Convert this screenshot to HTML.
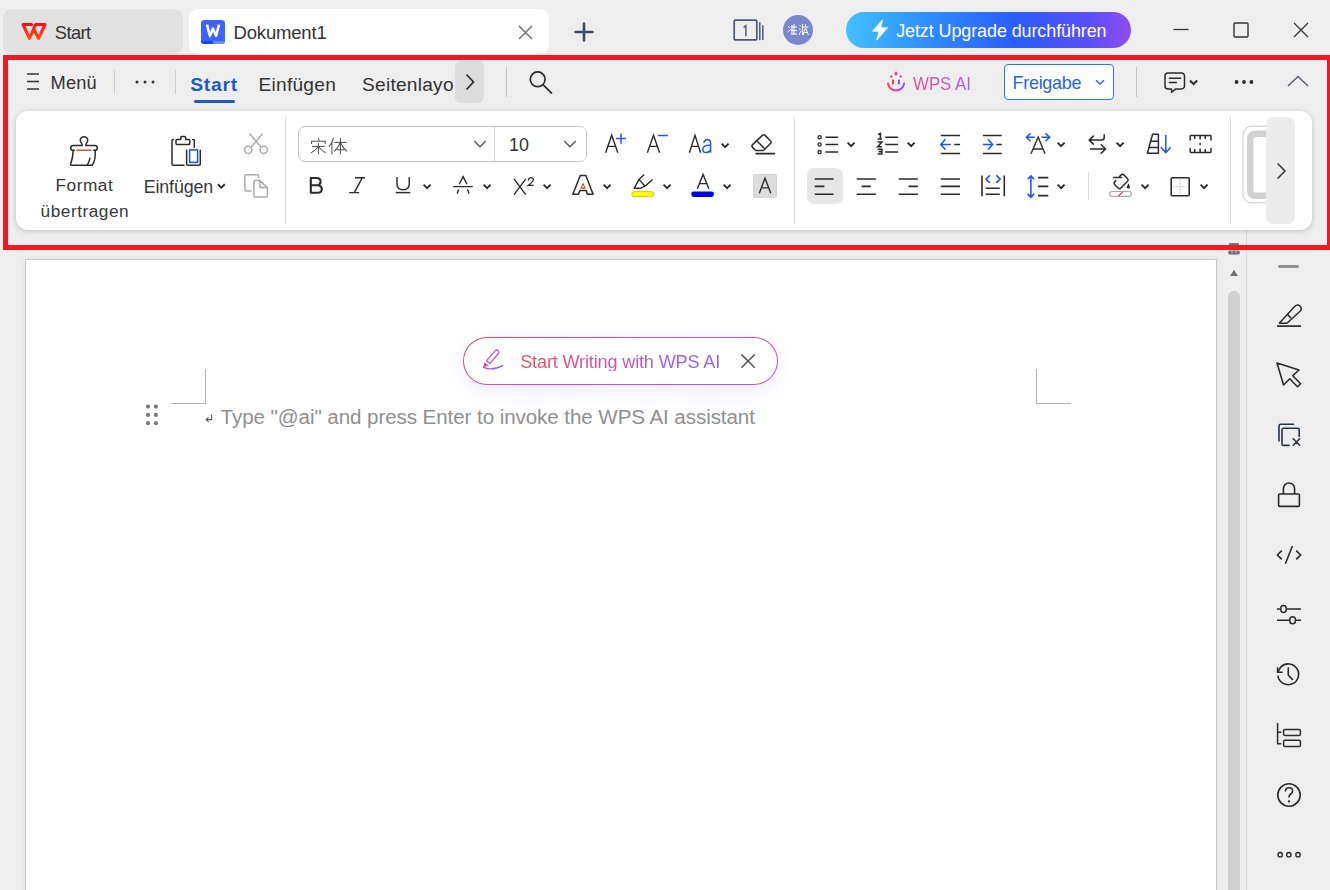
<!DOCTYPE html>
<html><head><meta charset="utf-8"><style>
html,body{margin:0;padding:0;}
body{width:1330px;height:890px;overflow:hidden;position:relative;background:#eeeeee;font-family:"Liberation Sans",sans-serif;}
.t{position:absolute;line-height:1;white-space:nowrap;}
svg{overflow:visible}
</style></head><body>
<div style="position:absolute;left:3px;top:9px;width:180px;height:45px;background:#e1e1e1;border-radius:9px"></div>
<div style="position:absolute;left:189px;top:9px;width:360px;height:45px;background:#ffffff;border-radius:9px"></div>
<svg style="position:absolute;left:18px;top:18px;" width="32" height="26" viewBox="0 0 32 26" fill="none"><defs><linearGradient id="wl" x1="0" y1="0" x2="0" y2="1"><stop offset="0" stop-color="#ff0d14"/><stop offset="1" stop-color="#ff4d0d"/></linearGradient></defs><path d="M13.6 6.5 L5 6.5 L11.5 20.5 L17.5 6.5 L27 6.5 L20.5 20.5 L16.6 12.3" stroke="url(#wl)" stroke-width="3" stroke-linejoin="round" stroke-linecap="round"/></svg>
<div class="t" style="left:54.80px;top:23.74px;font-size:18.26px;color:#333333;font-weight:400;letter-spacing:-0.572px;">Start</div>
<svg style="position:absolute;left:201px;top:20px;" width="24" height="24" viewBox="0 0 24 24" fill="none"><rect x="0" y="0" width="24" height="24" rx="3.5" fill="#3e62ff"/><path d="M0 21 H12 V24 H3.5 A3.5 3.5 0 0 1 0 20.5Z" fill="#0b4fe0"/><path d="M12 21 H24 V20.5 A3.5 3.5 0 0 1 20.5 24 H12Z" fill="#6a8cff"/><path d="M6 4.6 L8.9 15.9 L12 8.6 L15.1 15.9 L18 4.6" stroke="#fff" stroke-width="2.5" stroke-linejoin="round" fill="none"/></svg>
<div class="t" style="left:233.50px;top:24.30px;font-size:18.55px;color:#333333;font-weight:400;letter-spacing:-0.193px;">Dokument1</div>
<svg style="position:absolute;left:518px;top:25px;" width="15" height="15" viewBox="0 0 15 15" fill="none"><path d="M1 1 L14 14 M14 1 L1 14" stroke="#707070" stroke-width="1.5"/></svg>
<svg style="position:absolute;left:574px;top:22px;" width="20" height="20" viewBox="0 0 20 20" fill="none"><path d="M10 1.5 V18.5 M1.5 10 H18.5" stroke="#3b4a6b" stroke-width="2.6" stroke-linecap="round"/></svg>
<svg style="position:absolute;left:733px;top:19px;" width="32" height="22" viewBox="0 0 32 22" fill="none"><rect x="1.2" y="1.2" width="22.6" height="19.6" rx="1" stroke="#4a5878" stroke-width="1.7" fill="none"/><path d="M26.8 3.8 V20.6 M29.8 6.8 V20.6" stroke="#4a5878" stroke-width="1.5" stroke-linecap="round"/></svg>
<svg style="position:absolute;left:733px;top:19px;" width="24" height="22" viewBox="0 0 24 22" fill="none"><path d="M10.6 8.6 L12.9 6.6 V17.2" stroke="#3b4a6b" stroke-width="1.3" fill="none"/></svg>
<svg style="position:absolute;left:783px;top:15px;" width="30" height="30" viewBox="0 0 30 30" fill="none"><circle cx="15" cy="15" r="15" fill="#7b87cd"/><g stroke="#fff" stroke-width="1" fill="none"><path d="M5 11 L7 13 M4.5 17 L8 14.5 M9 10 V20 M8 12 H14 M8 15.5 H14 M11 9 V20 M8.5 19 H14"/><path d="M16.5 10 L18 11.5 M16 13.5 L17.5 15 M16 20 L18 16 M19.5 9 V20 M19 12 H25.5 M22.5 9 V12 M20 20 L22.5 13 L25.5 20 M21 17.5 H24"/></g></svg>
<div style="position:absolute;left:846px;top:12px;width:285px;height:36px;border-radius:18px;background:linear-gradient(90deg,#42c0ff 0%,#2f8bff 30%,#2a5dff 60%,#5a4ff7 85%,#8e4cf0 100%)"></div>
<svg style="position:absolute;left:870px;top:19px;" width="20" height="22" viewBox="0 0 20 22" fill="none"><path d="M12.5 0.8 L2.5 12.2 H9.2 L6.6 21.2 L17.5 8.8 H10.6 Z" fill="#fff" stroke="#fff" stroke-width="0.8" stroke-linejoin="round"/></svg>
<div class="t" style="left:896.20px;top:22.89px;font-size:17.97px;color:#ffffff;font-weight:400;letter-spacing:-0.090px;">Jetzt Upgrade durchführen</div>
<svg style="position:absolute;left:1173px;top:28px;" width="16" height="3" viewBox="0 0 16 3" fill="none"><path d="M0.5 1.5 H15.5" stroke="#333" stroke-width="1.3"/></svg>
<svg style="position:absolute;left:1233px;top:22px;" width="16" height="16" viewBox="0 0 16 16" fill="none"><rect x="1" y="1" width="14" height="14" rx="1" stroke="#333" stroke-width="1.4" fill="none"/></svg>
<svg style="position:absolute;left:1293px;top:22px;" width="16" height="16" viewBox="0 0 16 16" fill="none"><path d="M1 1 L15 15 M15 1 L1 15" stroke="#333" stroke-width="1.3"/></svg>
<div style="position:absolute;left:25px;top:259px;width:1190px;height:700px;background:#fff;border:1px solid #c9c9c9;box-shadow:0 0 5px rgba(0,0,0,0.07)"></div>
<div style="position:absolute;left:1246px;top:230px;width:1px;height:660px;background:#d9d9d9"></div>
<div style="position:absolute;left:1228px;top:291px;width:12px;height:640px;background:#d0d0d0;border-radius:6px"></div>
<svg style="position:absolute;left:1226px;top:240px;" width="16" height="40" viewBox="0 0 16 40" fill="none"><rect x="3" y="3" width="10" height="3" rx="1" fill="#6f7a7a"/><rect x="2.2" y="10.6" width="11.6" height="4" rx="1.6" fill="#707070"/><path d="M6 10.6 V12.8 M10 10.6 V12.8" stroke="#eee" stroke-width="0.8"/><path d="M4 36 L8 29.7 L12 36Z" fill="#707070"/></svg>
<div style="position:absolute;left:205px;top:369px;width:1px;height:35px;background:#b4b4b4"></div>
<div style="position:absolute;left:171px;top:403px;width:35px;height:1px;background:#b4b4b4"></div>
<div style="position:absolute;left:1036px;top:369px;width:1px;height:35px;background:#b4b4b4"></div>
<div style="position:absolute;left:1036px;top:403px;width:35px;height:1px;background:#b4b4b4"></div>
<svg style="position:absolute;left:144px;top:402px;" width="16" height="26" viewBox="0 0 16 26" fill="none"><circle cx="4" cy="4.6" r="2.1" fill="#7a7a7a"/><circle cx="4" cy="12.9" r="2.1" fill="#7a7a7a"/><circle cx="4" cy="21.2" r="2.1" fill="#7a7a7a"/><circle cx="11.9" cy="4.6" r="2.1" fill="#7a7a7a"/><circle cx="11.9" cy="12.9" r="2.1" fill="#7a7a7a"/><circle cx="11.9" cy="21.2" r="2.1" fill="#7a7a7a"/></svg>
<svg style="position:absolute;left:204px;top:413px;" width="10" height="12" viewBox="0 0 10 12" fill="none"><path d="M7.6 1.6 V6.6 H2.6 M4.6 4.4 L2.2 6.6 L4.6 8.8" stroke="#555" stroke-width="1.1" fill="none"/></svg>
<div class="t" style="left:220.60px;top:406.58px;font-size:20.58px;color:#8f8f8f;font-weight:400;letter-spacing:-0.079px;">Type &quot;@ai&quot; and press Enter to invoke the WPS AI assistant</div>
<div style="position:absolute;left:463px;top:337px;width:315px;height:48px;box-sizing:border-box;border-radius:24px;border:1.2px solid transparent;background:linear-gradient(#fff,#fff) padding-box,linear-gradient(170deg,#f5475a 0%,#c452c4 55%,#9a5ef5 100%) border-box;box-shadow:0 6px 22px rgba(130,90,255,0.13)"></div>
<svg style="position:absolute;left:478px;top:344px;" width="30" height="30" viewBox="0 0 30 30" fill="none"><defs><linearGradient id="pg" gradientUnits="userSpaceOnUse" x1="6" y1="6" x2="24" y2="26"><stop offset="0" stop-color="#e24e8a"/><stop offset="0.45" stop-color="#c256c0"/><stop offset="1" stop-color="#8060ff"/></linearGradient></defs><path d="M8.4 16.8 L17 6.8 Q18.6 5.2 20.2 6.6 Q21.6 8.2 20.2 9.8 L11.8 19.6 Z" stroke="url(#pg)" stroke-width="1.3" fill="none" stroke-linejoin="round"/><path d="M6.4 18.2 L10.6 21.6 L5.2 23.6 Z" fill="#d2529c"/><path d="M5.6 23.4 Q14 27.2 24.8 21.6" stroke="url(#pg)" stroke-width="1.3" fill="none" stroke-linecap="round"/></svg>
<div class="t" style="left:520.20px;top:353.16px;font-size:18.12px;color:#d0509a;font-weight:400;letter-spacing:-0.163px;background:linear-gradient(90deg,#f24c5c 0%,#d452a0 45%,#a85ce0 75%,#8a60f8 100%);-webkit-background-clip:text;background-clip:text;-webkit-text-fill-color:transparent;">Start Writing with WPS AI</div>
<svg style="position:absolute;left:740px;top:353px;" width="16" height="16" viewBox="0 0 16 16" fill="none"><path d="M1.4 1.4 L14.8 14.8 M14.8 1.4 L1.4 14.8" stroke="#5a5a5a" stroke-width="1.5"/></svg>
<div style="position:absolute;left:1278px;top:265px;width:21px;height:3px;background:#8f8f8f;border-radius:1.5px"></div>
<svg style="position:absolute;left:1270px;top:296px;" width="40" height="40" viewBox="0 0 40 40" fill="none"><g stroke="#2b2b2b" stroke-width="1.5" fill="none" stroke-linejoin="round"><path d="M9.3 27.3 L24.6 10.6 Q27.4 7.6 30.1 10.1 Q32.6 12.7 30.1 15.3 L16.9 27.3 Z"/><path d="M17.4 18.4 L21.2 22.2"/></g><path d="M7 30.1 H31" stroke="#2b2b2b" stroke-width="1.7"/></svg>
<svg style="position:absolute;left:1270px;top:356px;" width="40" height="40" viewBox="0 0 40 40" fill="none"><path d="M7 7 L29 14 L22.8 19.7 L30.6 27.7 L27.4 30.8 L19.8 22.8 L13.6 29 Z" stroke="#2b2b2b" stroke-width="1.6" fill="none" stroke-linejoin="round"/></svg>
<svg style="position:absolute;left:1270px;top:416px;" width="40" height="40" viewBox="0 0 40 40" fill="none"><g stroke="#283245" stroke-width="1.6" fill="none" stroke-linecap="round"><path d="M9 25 V10 Q9 8.3 10.7 8.3 H23.5"/><path d="M19 29.4 H13.5 Q12 29.4 12 28 V13.6 Q12 12.2 13.5 12.2 H27.8 Q29.2 12.2 29.2 13.6 V20.5"/><path d="M23.3 22.8 L29.6 29.2 M29.6 22.8 L23.3 29.2"/></g></svg>
<svg style="position:absolute;left:1270px;top:476px;" width="40" height="40" viewBox="0 0 40 40" fill="none"><g stroke="#2b2b2b" stroke-width="1.6" fill="none"><path d="M13.4 18 V12.6 A5.6 5.6 0 0 1 24.6 12.6 V18"/><rect x="8.6" y="18" width="20.8" height="12.4" rx="1"/></g></svg>
<svg style="position:absolute;left:1270px;top:536px;" width="40" height="40" viewBox="0 0 40 40" fill="none"><g stroke="#2b2b2b" stroke-width="1.6" fill="none"><path d="M11.8 14.6 L7.4 19 L11.8 23.4 M26.2 14.6 L30.6 19 L26.2 23.4 M22.4 10 L15.4 27.8"/></g></svg>
<svg style="position:absolute;left:1270px;top:596px;" width="40" height="40" viewBox="0 0 40 40" fill="none"><g stroke="#2b2b2b" stroke-width="1.5" fill="none"><path d="M7 12.9 H10.8 M16.2 12.9 H31 M7 24.3 H19.8 M25.4 24.3 H31"/><rect x="10.8" y="9.4" width="5.4" height="7" rx="2.7"/><rect x="19.8" y="20.8" width="5.6" height="7" rx="2.8"/></g></svg>
<svg style="position:absolute;left:1270px;top:657px;" width="40" height="40" viewBox="0 0 40 40" fill="none"><g stroke="#2b2b2b" stroke-width="1.6" fill="none"><path d="M7.9 18.6 A10.4 10.4 0 1 0 10.95 9.85 L7.6 15.3"/><path d="M7.6 10.2 V15.3 H12.7"/><path d="M18.3 10.2 V18.2 L22.9 22.9"/></g></svg>
<svg style="position:absolute;left:1270px;top:716px;" width="40" height="40" viewBox="0 0 40 40" fill="none"><g stroke="#2b2b2b" stroke-width="1.5" fill="none"><path d="M7.6 7 V27.8 H11.4 M7.6 16.3 H11.4"/><rect x="13.6" y="13.4" width="16.8" height="6.2" rx="1.4"/><rect x="13.6" y="24.2" width="16.8" height="6.4" rx="1.4"/></g></svg>
<svg style="position:absolute;left:1270px;top:776px;" width="40" height="40" viewBox="0 0 40 40" fill="none"><g stroke="#2b2b2b" stroke-width="1.6" fill="none"><circle cx="19" cy="19" r="11.2"/><path d="M15.4 15.6 Q15.4 11.8 19 11.8 Q22.6 11.8 22.6 15 Q22.6 17 20.4 18.2 Q19 19 19 21.4"/></g><circle cx="19" cy="25.4" r="1.1" fill="#2b2b2b"/></svg>
<svg style="position:absolute;left:1270px;top:836px;" width="40" height="40" viewBox="0 0 40 40" fill="none"><g stroke="#2b2b2b" stroke-width="1.4" fill="none"><circle cx="10.2" cy="18.7" r="2.2"/><circle cx="18.8" cy="18.7" r="2.2"/><circle cx="28" cy="18.7" r="2.2"/></g></svg>
<div style="position:absolute;left:16px;top:111px;width:1296px;height:119px;background:#fff;border-radius:12px;box-shadow:0 1px 5px rgba(0,0,0,0.2)"></div>
<div style="position:absolute;left:3px;top:55px;width:1329px;height:195px;box-sizing:border-box;border:5px solid #ed1c24"></div>
<svg style="position:absolute;left:26px;top:72px;" width="14" height="19" viewBox="0 0 14 19" fill="none"><path d="M1 2 H13 M1 9.5 H13 M1 17 H13" stroke="#333" stroke-width="1.5"/></svg>
<div class="t" style="left:50.60px;top:73.54px;font-size:18.26px;color:#333333;font-weight:400;letter-spacing:0.127px;">Menü</div>
<div style="position:absolute;left:114px;top:70px;width:1px;height:24px;background:#cfcfcf"></div>
<svg style="position:absolute;left:134px;top:79px;" width="22" height="6" viewBox="0 0 22 6" fill="none"><circle cx="3" cy="3" r="1.5" fill="#333"/><circle cx="11" cy="3" r="1.5" fill="#333"/><circle cx="19" cy="3" r="1.5" fill="#333"/></svg>
<div style="position:absolute;left:175px;top:70px;width:1px;height:24px;background:#cfcfcf"></div>
<div class="t" style="left:190.20px;top:74.88px;font-size:19.28px;color:#1c58c9;font-weight:700;letter-spacing:0.774px;">Start</div>
<div style="position:absolute;left:194px;top:100px;width:41px;height:3px;background:#1c58c9;border-radius:2px"></div>
<div class="t" style="left:258.50px;top:74.71px;font-size:19.13px;color:#333333;font-weight:400;letter-spacing:0.260px;">Einfügen</div>
<div style="position:absolute;left:362px;top:60px;width:91px;height:45px;overflow:hidden">
<div class="t" style="left:0.00px;top:14.71px;font-size:19.13px;color:#333333;font-weight:400;letter-spacing:0.257px;">Seitenlayout</div>
</div>
<div style="position:absolute;left:455px;top:61px;width:29px;height:42px;background:#dcdcdc;border-radius:6px"></div>
<svg style="position:absolute;left:464px;top:72px;" width="12" height="20" viewBox="0 0 12 20" fill="none"><path d="M2.5 2.5 L9.5 10 L2.5 17.5" stroke="#2b2b2b" stroke-width="1.7" fill="none"/></svg>
<div style="position:absolute;left:506px;top:67px;width:1px;height:30px;background:#c4c4c4"></div>
<svg style="position:absolute;left:527px;top:69px;" width="28" height="28" viewBox="0 0 28 28" fill="none"><circle cx="10.7" cy="10.3" r="7.4" stroke="#2b2b2b" stroke-width="1.7" fill="none"/><path d="M16.2 15.8 L24.5 24.2" stroke="#2b2b2b" stroke-width="1.7" stroke-linecap="round"/></svg>
<svg style="position:absolute;left:880px;top:64px;" width="40" height="32" viewBox="0 0 40 32" fill="none"><defs><linearGradient id="ai1" x1="0" y1="0" x2="1" y2="0"><stop offset="0" stop-color="#ff3f4f"/><stop offset="1" stop-color="#8f52ff"/></linearGradient></defs><path d="M8 19.4 A8.1 8.1 0 0 0 24.1 19.4" stroke="url(#ai1)" stroke-width="2" stroke-linecap="round"/><path d="M13 16.5 V19.6 M18.9 16.5 V19.6" stroke="url(#ai1)" stroke-width="2.2" stroke-linecap="round"/><path d="M16 7.3 L18 9.5 L16 11.7 L14 9.5Z M11.3 10.9 L12.8 12.4 L11.3 13.9 L9.8 12.4Z M20.7 10.9 L22.2 12.4 L20.7 13.9 L19.2 12.4Z" fill="url(#ai1)"/></svg>
<div style="position:absolute;left:0;top:0;width:0;height:0"></div>
<div class="t" style="left:912.60px;top:74.54px;font-size:18.26px;color:#c45ed2;font-weight:400;letter-spacing:0.000px;transform:scaleX(0.9222);transform-origin:0 0;background:linear-gradient(90deg,#e0508f,#a65ef0);-webkit-background-clip:text;background-clip:text;-webkit-text-fill-color:transparent;">WPS AI</div>
<div style="position:absolute;left:1004px;top:64px;width:110px;height:36px;box-sizing:border-box;background:#fff;border:1px solid #2b72f6;border-radius:4px"></div>
<div class="t" style="left:1012.60px;top:74.79px;font-size:17.97px;color:#1f64ec;font-weight:400;letter-spacing:-0.289px;">Freigabe</div>
<svg style="position:absolute;left:1094px;top:78px;" width="12" height="8" viewBox="0 0 12 8" fill="none"><path d="M2 2.2 L6 6 L10 2.2" stroke="#1f64ec" stroke-width="1.5" fill="none"/></svg>
<div style="position:absolute;left:1136px;top:67px;width:1px;height:30px;background:#c4c4c4"></div>
<svg style="position:absolute;left:1158px;top:66px;" width="44" height="32" viewBox="0 0 44 32" fill="none"><path d="M10 6.9 H23.5 A3 3 0 0 1 26.5 9.9 V19.9 A3 3 0 0 1 23.5 22.9 H17.6 L13.8 26.3 L13.4 22.9 H10 A3 3 0 0 1 7 19.9 V9.9 A3 3 0 0 1 10 6.9Z" stroke="#2b2b2b" stroke-width="1.5" stroke-linejoin="round"/><path d="M11.4 12.2 H22.7 M11.4 16.6 H18.4" stroke="#2b2b2b" stroke-width="1.5" stroke-linecap="round"/><path d="M32 14.6 L35.6 18 L39.2 14.6" stroke="#2b2b2b" stroke-width="2" fill="none"/></svg>
<svg style="position:absolute;left:1232px;top:79px;" width="24" height="6" viewBox="0 0 24 6" fill="none"><circle cx="4.6" cy="3" r="1.9" fill="#2b2b2b"/><circle cx="12" cy="3" r="1.9" fill="#2b2b2b"/><circle cx="19.4" cy="3" r="1.9" fill="#2b2b2b"/></svg>
<svg style="position:absolute;left:1286px;top:74px;" width="24" height="14" viewBox="0 0 24 14" fill="none"><path d="M2 12 L12 2.5 L22 12" stroke="#5d6470" stroke-width="1.6" fill="none"/></svg>
<svg style="position:absolute;left:64px;top:130px;" width="40" height="40" viewBox="0 0 40 40" fill="none"><g stroke="#2b2b2b" stroke-width="1.5" stroke-linecap="round" stroke-linejoin="round" fill="none"><path d="M18.2 15.5 L17.6 13.2 A3.7 3.7 0 1 1 22.4 13.2 L21.8 15.5"/><path d="M18.2 15.5 H9.1 A2.4 2.4 0 0 0 9.1 20.3 H10.3 M21.8 15.5 H30.9 A2.4 2.4 0 0 1 30.9 20.3 H29.7"/><path d="M9.2 20.4 C9 26 8.2 30 6.6 34.2 Q6.3 35.3 7.6 35.3 H28.3 C30.6 32.3 31.6 29 31.2 20.4"/><path d="M25.9 28.3 C25.4 31 24.5 33.2 23.2 35.2"/></g><path d="M12.9 20.2 H27" stroke="#d0581a" stroke-width="1.6" stroke-linecap="round"/></svg>
<div class="t" style="left:55.40px;top:177.40px;font-size:17.25px;color:#383838;font-weight:400;letter-spacing:0.552px;">Format</div>
<div class="t" style="left:40.60px;top:202.70px;font-size:17.25px;color:#383838;font-weight:400;letter-spacing:0.506px;">übertragen</div>
<svg style="position:absolute;left:166px;top:130px;" width="40" height="40" viewBox="0 0 40 40" fill="none"><g stroke="#2b2b2b" stroke-width="1.5" stroke-linecap="round" stroke-linejoin="round" fill="none"><path d="M7.3 9.5 H7 Q6 9.5 6 10.5 V34.3 Q6 35.3 7 35.3 H18"/><path d="M26.6 9.5 H27.3 Q28.3 9.5 28.3 10.5 V17.3"/><path d="M14.7 9.5 V7.6 Q14.7 6.6 15.7 6.6 H18.6 Q19.6 6.6 19.6 7.6 V9.5 H22.8 Q23.8 9.5 23.8 10.5 V13.4 Q23.8 14.4 22.8 14.4 H11 Q10 14.4 10 13.4 V10.5 Q10 9.5 11 9.5 Z"/><path d="M20.6 20.2 V34 Q20.6 35.3 22 35.3 H33 Q34.3 35.3 34.3 34 V20.2"/></g><rect x="23.6" y="19.9" width="8" height="12.5" stroke="#1d4cff" stroke-width="1.5" fill="none"/></svg>
<div class="t" style="left:143.80px;top:179.21px;font-size:17.83px;color:#383838;font-weight:400;letter-spacing:-0.153px;">Einfügen</div>
<svg style="position:absolute;left:214px;top:181px;" width="14" height="10" viewBox="0 0 14 10" fill="none"><path d="M3.8 3.2 L7.3 6.6 L10.8 3.2" stroke="#2b2b2b" stroke-width="1.9" fill="none"/></svg>
<svg style="position:absolute;left:238px;top:128px;" width="36" height="76" viewBox="0 0 36 76" fill="none"><g stroke="#ababab" stroke-width="1.5" fill="none" stroke-linecap="round"><circle cx="10.3" cy="21.8" r="3.6"/><circle cx="25.7" cy="21.8" r="3.6"/><path d="M12 6 L22.7 19 M24.2 6 L13.4 19"/><path d="M13 63 H8 Q6.9 63 6.9 62 V47.8 Q6.9 46.8 8 46.8 H19.4 Q20.5 46.8 20.5 47.8 V49.5"/><path d="M22 52.6 H17 Q15.9 52.6 15.9 53.7 V67.9 Q15.9 69 17 69 H28.3 Q29.4 69 29.4 67.9 V59.6 L22 52.6 V59.6 H29.4"/></g></svg>
<div style="position:absolute;left:285px;top:117px;width:1px;height:107px;background:#dcdcdc"></div>
<div style="position:absolute;left:298px;top:126px;width:289px;height:36px;box-sizing:border-box;border:1px solid #c9c9c9;border-radius:7px;background:#fff"></div>
<div style="position:absolute;left:494px;top:127px;width:1px;height:34px;background:#d2d2d2"></div>
<svg style="position:absolute;left:310px;top:138px;" width="38" height="17" viewBox="0 0 38 17" fill="none"><g stroke="#505050" stroke-width="1.05" fill="none" stroke-linecap="square"><path d="M8.3 0.6 L9 2.2"/><path d="M1.6 5.4 V3.3 H15.2 V5.4"/><path d="M2.6 8.4 H14.3"/><path d="M8.4 5.6 V15.8"/><path d="M8.2 8.8 Q5.6 12.4 1.4 14.6"/><path d="M8.6 8.8 Q11.2 12.4 15.4 14.6"/><path d="M23.4 0.6 Q21.8 5.2 19.3 8.2"/><path d="M21.9 4.8 V15.8"/><path d="M24.7 4.4 H36.2"/><path d="M30.4 0.6 V15.8"/><path d="M30.2 4.8 Q28 10 24.6 13"/><path d="M30.6 4.8 Q32.8 10 36.4 13"/><path d="M27.2 11.8 H33.6"/></g></svg>
<svg style="position:absolute;left:472px;top:138px;" width="16" height="12" viewBox="0 0 16 12" fill="none"><path d="M2.2 3 L8 8.8 L13.8 3" stroke="#555" stroke-width="1.3" fill="none"/></svg>
<div class="t" style="left:509.00px;top:137.09px;font-size:17.97px;color:#333333;font-weight:400;letter-spacing:-0.093px;">10</div>
<svg style="position:absolute;left:562px;top:138px;" width="16" height="12" viewBox="0 0 16 12" fill="none"><path d="M2.2 3 L8 8.8 L13.8 3" stroke="#555" stroke-width="1.3" fill="none"/></svg>
<svg style="position:absolute;left:600px;top:130px;" width="30" height="26" viewBox="0 0 30 26" fill="none"><path d="M5.6 22.8 L11.7 5.2 L17.8 22.8 M7.9 16.4 H15.5" stroke="#2b2b2b" stroke-width="1.4" fill="none" stroke-linejoin="miter"/><path d="M21 3.5 V13.8 M15.9 8.6 H26" stroke="#2359f0" stroke-width="1.5"/></svg>
<svg style="position:absolute;left:642px;top:130px;" width="30" height="26" viewBox="0 0 30 26" fill="none"><path d="M5.4 22.8 L11.5 5.2 L17.6 22.8 M7.7 16.4 H15.3" stroke="#2b2b2b" stroke-width="1.4" fill="none" stroke-linejoin="miter"/><path d="M15.7 5.5 H26" stroke="#2359f0" stroke-width="1.5"/></svg>
<svg style="position:absolute;left:684px;top:130px;" width="34" height="26" viewBox="0 0 34 26" fill="none"><path d="M5.4 22.8 L11 5.2 L16.6 22.8 M7.4 16.4 H14.6" stroke="#2b2b2b" stroke-width="1.4" fill="none" stroke-linejoin="miter"/><path d="M19.6 12.6 Q20.8 9.6 23.6 9.6 Q26.6 9.8 26.6 13 V22.8 M26.6 15.4 Q18.8 15 18.8 19 Q18.8 22.6 22.2 22.6 Q25.4 22.6 26.6 19.4" stroke="#2359f0" stroke-width="1.5" fill="none"/></svg>
<svg style="position:absolute;left:719.5px;top:141.5px;" width="11" height="8" viewBox="0 0 11 8" fill="none"><path d="M1.6 1.6 L5.1 5.1 L8.6 1.6" stroke="#2b2b2b" stroke-width="1.9" fill="none"/></svg>
<svg style="position:absolute;left:748px;top:130px;" width="30" height="28" viewBox="0 0 30 28" fill="none"><g stroke="#2b2b2b" stroke-width="1.5" fill="none" stroke-linejoin="round"><path d="M14.3 5.4 Q15.7 4 17.1 5.4 L22.4 10.7 Q23.8 12.1 22.4 13.5 L16 20 Q15.6 20.4 15 20.4 H8.2 Q7.6 20.4 7.2 20 L4.6 17.4 Q3.2 16 4.6 14.6 Z"/><path d="M9 11 L16.4 18.6"/></g><path d="M8.1 23.6 H26.5" stroke="#2b2b2b" stroke-width="1.6" stroke-linecap="round"/></svg>
<svg style="position:absolute;left:305px;top:173px;" width="22" height="24" viewBox="0 0 22 24" fill="none"><path d="M5.8 5 H11.6 Q15.6 5 15.6 8.6 Q15.6 11.6 12.6 12.2 Q16.8 12.6 16.8 16.2 Q16.8 19.8 12.4 19.8 H5.8 Z M5.8 12.2 H12.4" stroke="#2b2b2b" stroke-width="2.1" fill="none" stroke-linejoin="round"/></svg>
<svg style="position:absolute;left:345px;top:173px;" width="24" height="24" viewBox="0 0 24 24" fill="none"><path d="M10 4.8 H20 M4.2 19.6 H14.1 M17.2 4.8 L9.3 19.6" stroke="#2b2b2b" stroke-width="1.4" fill="none"/></svg>
<svg style="position:absolute;left:392px;top:172px;" width="22" height="24" viewBox="0 0 22 24" fill="none"><path d="M5 5 V12 Q5 17.7 11 17.7 Q17.2 17.7 17.2 12 V5" stroke="#2b2b2b" stroke-width="1.4" fill="none"/><path d="M3.8 20.6 H18.3" stroke="#2b2b2b" stroke-width="1.5"/></svg>
<svg style="position:absolute;left:421.5px;top:182.7px;" width="11" height="8" viewBox="0 0 11 8" fill="none"><path d="M1.6 1.6 L5.1 5.1 L8.6 1.6" stroke="#2b2b2b" stroke-width="1.9" fill="none"/></svg>
<svg style="position:absolute;left:450px;top:172px;" width="26" height="26" viewBox="0 0 26 26" fill="none"><path d="M9.2 12.2 L13.1 4.6 L17 12.2 M3.1 14.6 H22.7 M8.6 17.4 L7.2 21.8 M17.6 17.4 L19 21.8" stroke="#2b2b2b" stroke-width="1.4" fill="none"/></svg>
<svg style="position:absolute;left:481.5px;top:183.2px;" width="11" height="8" viewBox="0 0 11 8" fill="none"><path d="M1.6 1.6 L5.1 5.1 L8.6 1.6" stroke="#2b2b2b" stroke-width="1.9" fill="none"/></svg>
<svg style="position:absolute;left:510px;top:172px;" width="28" height="26" viewBox="0 0 28 26" fill="none"><path d="M4 6.9 L15.8 22.7 M15.8 6.9 L4 22.7" stroke="#2b2b2b" stroke-width="1.4" fill="none"/><path d="M18.3 8.6 Q18.6 5.6 21 5.6 Q23.4 5.6 23.4 7.8 Q23.4 9.6 18.2 13.4 H23.6" stroke="#2b2b2b" stroke-width="1.25" fill="none"/></svg>
<svg style="position:absolute;left:541.7px;top:182.6px;" width="11" height="8" viewBox="0 0 11 8" fill="none"><path d="M1.6 1.6 L5.1 5.1 L8.6 1.6" stroke="#2b2b2b" stroke-width="1.9" fill="none"/></svg>
<svg style="position:absolute;left:568px;top:171px;" width="30" height="28" viewBox="0 0 30 28" fill="none"><path d="M12.3 4.5 H17.9 L25.1 23.3 H19.4 L18.3 19.6 H11.9 L10.4 23.3 H4.8 Z" stroke="#2b2b2b" stroke-width="1.5" fill="none" stroke-linejoin="round"/><path d="M15 11.3 L17.9 17.7 H12.1 Z M15 14 L16.1 16.3 H13.9 Z" fill="#d0581a" fill-rule="evenodd"/></svg>
<svg style="position:absolute;left:601.7px;top:182.8px;" width="11" height="8" viewBox="0 0 11 8" fill="none"><path d="M1.6 1.6 L5.1 5.1 L8.6 1.6" stroke="#2b2b2b" stroke-width="1.9" fill="none"/></svg>
<svg style="position:absolute;left:628px;top:170px;" width="30" height="30" viewBox="0 0 30 30" fill="none"><g stroke="#2b2b2b" stroke-width="1.4" fill="none" stroke-linejoin="round"><path d="M16.2 4.4 L11 9.4 M24.5 9.4 L17 16.2 M11 9.4 L17 16.2 M11 9.4 L6.2 18.3 H12.2 L17 16.2"/></g><rect x="3.8" y="21.6" width="22" height="5" rx="2.2" fill="#ffff00" stroke="#c9c900" stroke-width="0.9"/></svg>
<svg style="position:absolute;left:661.5px;top:182.8px;" width="11" height="8" viewBox="0 0 11 8" fill="none"><path d="M1.6 1.6 L5.1 5.1 L8.6 1.6" stroke="#2b2b2b" stroke-width="1.9" fill="none"/></svg>
<svg style="position:absolute;left:688px;top:170px;" width="30" height="30" viewBox="0 0 30 30" fill="none"><path d="M9.3 18.7 L15.1 4.4 L20.9 18.7 M11.2 13.6 H19" stroke="#2b2b2b" stroke-width="1.4" fill="none" stroke-linejoin="miter"/><rect x="3.3" y="21.4" width="22.6" height="5.6" rx="2.4" fill="#0000ee"/></svg>
<svg style="position:absolute;left:721.5px;top:183.2px;" width="11" height="8" viewBox="0 0 11 8" fill="none"><path d="M1.6 1.6 L5.1 5.1 L8.6 1.6" stroke="#2b2b2b" stroke-width="1.9" fill="none"/></svg>
<div style="position:absolute;left:753px;top:174px;width:24px;height:24px;box-sizing:border-box;background:#dcdcdc;border:1px solid #d2d2d2;border-radius:2px"></div>
<svg style="position:absolute;left:753px;top:174px;" width="24" height="24" viewBox="0 0 24 24" fill="none"><path d="M6.3 19.2 L12 4.2 L17.8 19.2 M8.3 13.9 H15.8" stroke="#2b2b2b" stroke-width="1.4" fill="none" stroke-linejoin="miter"/></svg>
<div style="position:absolute;left:794px;top:117px;width:1px;height:107px;background:#dcdcdc"></div>
<svg style="position:absolute;left:812px;top:130px;" width="30" height="26" viewBox="0 0 30 26" fill="none"><g stroke="#2b2b2b" stroke-width="1.3" fill="none"><circle cx="7.6" cy="7.2" r="1.6"/><circle cx="7.6" cy="14.5" r="1.6"/><circle cx="7.6" cy="22.1" r="1.6"/></g><path d="M13.4 7.2 H26.2 M13.4 14.5 H26.2 M13.4 22.1 H26.2" stroke="#2b2b2b" stroke-width="1.5"/></svg>
<svg style="position:absolute;left:846.2px;top:141.1px;" width="11" height="8" viewBox="0 0 11 8" fill="none"><path d="M1.6 1.6 L5.1 5.1 L8.6 1.6" stroke="#2b2b2b" stroke-width="1.9" fill="none"/></svg>
<svg style="position:absolute;left:872px;top:130px;" width="30" height="26" viewBox="0 0 30 26" fill="none"><path d="M13.2 7.2 H26.1 M13.2 14.5 H26.1 M13.2 22.1 H26.1" stroke="#2b2b2b" stroke-width="1.5"/><g stroke="#2b2b2b" stroke-width="1.6" fill="none"><path d="M6.2 4.4 L8.4 3.4 V9 M5.6 9 H10"/><path d="M5.6 12 H9.9 L5.7 16.8 H10"/><path d="M5.6 19.3 H9.8 V24 H5.6 M6.6 21.6 H9.8"/></g></svg>
<svg style="position:absolute;left:906.2px;top:141.1px;" width="11" height="8" viewBox="0 0 11 8" fill="none"><path d="M1.6 1.6 L5.1 5.1 L8.6 1.6" stroke="#2b2b2b" stroke-width="1.9" fill="none"/></svg>
<svg style="position:absolute;left:936px;top:130px;" width="30" height="28" viewBox="0 0 30 28" fill="none"><path d="M4.8 5.6 H24.1 M4.8 23.6 H24.1 M18.2 14.5 H24.1" stroke="#2b2b2b" stroke-width="1.5"/><path d="M14.8 14.5 H5.2 M9.5 9.3 L4.8 14.5 L9.5 19.8" stroke="#2155ea" stroke-width="1.5" fill="none"/></svg>
<svg style="position:absolute;left:978px;top:130px;" width="30" height="28" viewBox="0 0 30 28" fill="none"><path d="M4.9 5.6 H23.8 M4.9 23.6 H23.8 M18.3 14.5 H23.8" stroke="#2b2b2b" stroke-width="1.5"/><path d="M4.9 14.5 H14.3 M10 9.3 L14.7 14.5 L10 19.8" stroke="#2155ea" stroke-width="1.5" fill="none"/></svg>
<svg style="position:absolute;left:1022px;top:130px;" width="32" height="28" viewBox="0 0 32 28" fill="none"><path d="M9 23.8 L16.2 7 L23 23.8 M11.3 19 H20.8" stroke="#2b2b2b" stroke-width="1.4" fill="none" stroke-linejoin="miter"/><path d="M12.8 7.3 H4.6 M8.6 3.4 L4.4 7.3 L8.6 11.2 M19.3 7.3 H27.5 M23.5 3.4 L27.7 7.3 L23.5 11.2" stroke="#2155ea" stroke-width="1.5" fill="none"/></svg>
<svg style="position:absolute;left:1056.3px;top:141.2px;" width="11" height="8" viewBox="0 0 11 8" fill="none"><path d="M1.6 1.6 L5.1 5.1 L8.6 1.6" stroke="#2b2b2b" stroke-width="1.9" fill="none"/></svg>
<svg style="position:absolute;left:1084px;top:130px;" width="28" height="28" viewBox="0 0 28 28" fill="none"><path d="M20.2 4.3 V7.6 Q20.2 10.1 17.7 10.1 H5.6 M9.8 5.6 L5.2 10.1 L9.8 14.6" stroke="#2b2b2b" stroke-width="1.5" fill="none" stroke-linejoin="round"/><path d="M6 19 H21.4 M16.8 14.3 L21.6 19 L16.8 23.6" stroke="#2b2b2b" stroke-width="1.5" fill="none" stroke-linejoin="round"/></svg>
<svg style="position:absolute;left:1115.3px;top:141.2px;" width="11" height="8" viewBox="0 0 11 8" fill="none"><path d="M1.6 1.6 L5.1 5.1 L8.6 1.6" stroke="#2b2b2b" stroke-width="1.9" fill="none"/></svg>
<svg style="position:absolute;left:1142px;top:130px;" width="32" height="28" viewBox="0 0 32 28" fill="none"><path d="M10.6 4.3 H16.4 V23.3 H5.4 Z M8.9 11.2 H16.4 M7.2 17.5 H16.4" stroke="#2b2b2b" stroke-width="1.5" fill="none" stroke-linejoin="round"/><path d="M23.8 5 V22.4 M18.8 17.3 L23.8 22.6 L28.7 17.3" stroke="#2155ea" stroke-width="1.5" fill="none"/></svg>
<svg style="position:absolute;left:1186px;top:130px;" width="28" height="28" viewBox="0 0 28 28" fill="none"><path d="M4.2 10.6 V6.3 Q4.2 5.6 4.9 5.6 H24.3 Q25 5.6 25 6.3 V10.6 M4.2 18 V21.7 Q4.2 22.4 4.9 22.4 H24.3 Q25 22.4 25 21.7 V18 M8.7 5.6 V9 M14.1 5.6 V9.6 M19.3 5.6 V9 M8.7 22.4 V19 M14.1 22.4 V18.4 M19.3 22.4 V19 M14.1 13 V15" stroke="#2b2b2b" stroke-width="1.5" fill="none"/></svg>
<div style="position:absolute;left:807px;top:168px;width:36px;height:36px;background:#e6e6e6;border-radius:7px"></div>
<svg style="position:absolute;left:810px;top:170px;" width="26" height="24" viewBox="0 0 26 24" fill="none"><path d="M4.7 9 H23.6 M4.7 16.4 H14.4 M4.7 24.2 H23.6 " stroke="#2b2b2b" stroke-width="1.6"/></svg>
<svg style="position:absolute;left:852px;top:170px;" width="26" height="24" viewBox="0 0 26 24" fill="none"><path d="M4.7 9 H23.9 M9.6 16.4 H18.8 M4.7 24.2 H23.9 " stroke="#2b2b2b" stroke-width="1.6"/></svg>
<svg style="position:absolute;left:894px;top:170px;" width="26" height="24" viewBox="0 0 26 24" fill="none"><path d="M4.7 9 H23.9 M14.5 16.4 H23.9 M4.7 24.2 H23.9 " stroke="#2b2b2b" stroke-width="1.6"/></svg>
<svg style="position:absolute;left:936px;top:170px;" width="26" height="24" viewBox="0 0 26 24" fill="none"><path d="M4.8 9 H24 M4.8 16.4 H24 M4.8 24.2 H24 " stroke="#2b2b2b" stroke-width="1.6"/></svg>
<svg style="position:absolute;left:976px;top:170px;" width="32" height="30" viewBox="0 0 32 30" fill="none"><path d="M6 5.6 V26.2 M28.3 5.6 V26.2 M9.7 18.3 H23.8 M9.7 24.2 H23.8" stroke="#2b2b2b" stroke-width="1.6"/><path d="M13.9 5.4 L10 9.1 L13.9 12.8 M20.3 5.4 L24.2 9.1 L20.3 12.8" stroke="#2155ea" stroke-width="1.6" fill="none"/></svg>
<svg style="position:absolute;left:1022px;top:170px;" width="30" height="30" viewBox="0 0 30 30" fill="none"><path d="M8.9 6.3 V26.9 M5.6 9.3 L8.9 5.9 L12.2 9.3 M5.6 23.9 L8.9 27.3 L12.2 23.9" stroke="#2155ea" stroke-width="1.6" fill="none"/><path d="M16 7.6 H26.3 M16 16.4 H26.3 M16 25.6 H26.3" stroke="#2b2b2b" stroke-width="1.6"/></svg>
<svg style="position:absolute;left:1056.3px;top:183px;" width="11" height="8" viewBox="0 0 11 8" fill="none"><path d="M1.6 1.6 L5.1 5.1 L8.6 1.6" stroke="#2b2b2b" stroke-width="1.9" fill="none"/></svg>
<div style="position:absolute;left:1088px;top:172px;width:1px;height:28px;background:#dcdcdc"></div>
<svg style="position:absolute;left:1104px;top:170px;" width="32" height="30" viewBox="0 0 32 30" fill="none"><g stroke="#2b2b2b" stroke-width="1.5" fill="none" stroke-linejoin="round" stroke-linecap="round"><path d="M15.5 6.6 L17.2 4.9 Q18.5 3.6 19.8 4.9 L23.6 8.7 Q24.9 10 23.6 11.3 L16.9 18 Q15.5 19.4 14.1 18 L10.6 14.5 Q9.3 13.2 10.6 11.9 L11.8 10.6"/><path d="M9.8 7.5 H17.6"/></g><path d="M24.4 13.3 Q22.9 16.2 22.9 17.2 Q22.9 18.6 24.4 18.6 Q25.9 18.6 25.9 17.2 Q25.9 16.2 24.4 13.3Z" fill="#2b2b2b"/><rect x="5.6" y="21.5" width="21.8" height="4.8" rx="2.4" stroke="#a8a8a8" stroke-width="1.2" fill="#fff"/><path d="M18.7 21.8 L14.5 26" stroke="#e03a3a" stroke-width="1.1"/></svg>
<svg style="position:absolute;left:1139.5px;top:183px;" width="11" height="8" viewBox="0 0 11 8" fill="none"><path d="M1.6 1.6 L5.1 5.1 L8.6 1.6" stroke="#2b2b2b" stroke-width="1.9" fill="none"/></svg>
<svg style="position:absolute;left:1166px;top:172px;" width="28" height="28" viewBox="0 0 28 28" fill="none"><rect x="5.2" y="5.8" width="18" height="18" rx="1" stroke="#2b2b2b" stroke-width="1.6" fill="none"/><path d="M14.2 7.6 V22.2 M7 14.8 H21.4" stroke="#b8b8b8" stroke-width="0.9" stroke-dasharray="1.6 1.4"/></svg>
<svg style="position:absolute;left:1199px;top:183px;" width="11" height="8" viewBox="0 0 11 8" fill="none"><path d="M1.6 1.6 L5.1 5.1 L8.6 1.6" stroke="#2b2b2b" stroke-width="1.9" fill="none"/></svg>
<div style="position:absolute;left:1230px;top:117px;width:1px;height:107px;background:#dcdcdc"></div>
<svg style="position:absolute;left:1240px;top:124px;overflow:hidden" width="30" height="82" viewBox="0 0 30 82" fill="none"><rect x="3" y="2.2" width="50" height="76.6" rx="9" stroke="#c8c8c8" stroke-width="1" fill="#fff"/><path d="M40 9.8 H16 Q10.2 9.8 10.2 15.6 V66 Q10.2 71.8 16 71.8 H40" stroke="#d1d1d1" stroke-width="6.4" fill="none"/></svg>
<div style="position:absolute;left:1266px;top:117px;width:29px;height:107px;background:#ececec;border-radius:7px"></div>
<svg style="position:absolute;left:1274px;top:160px;" width="14" height="22" viewBox="0 0 14 22" fill="none"><path d="M3.6 3.4 L11 11 L3.6 18.6" stroke="#333" stroke-width="1.5" fill="none"/></svg>
</body></html>
